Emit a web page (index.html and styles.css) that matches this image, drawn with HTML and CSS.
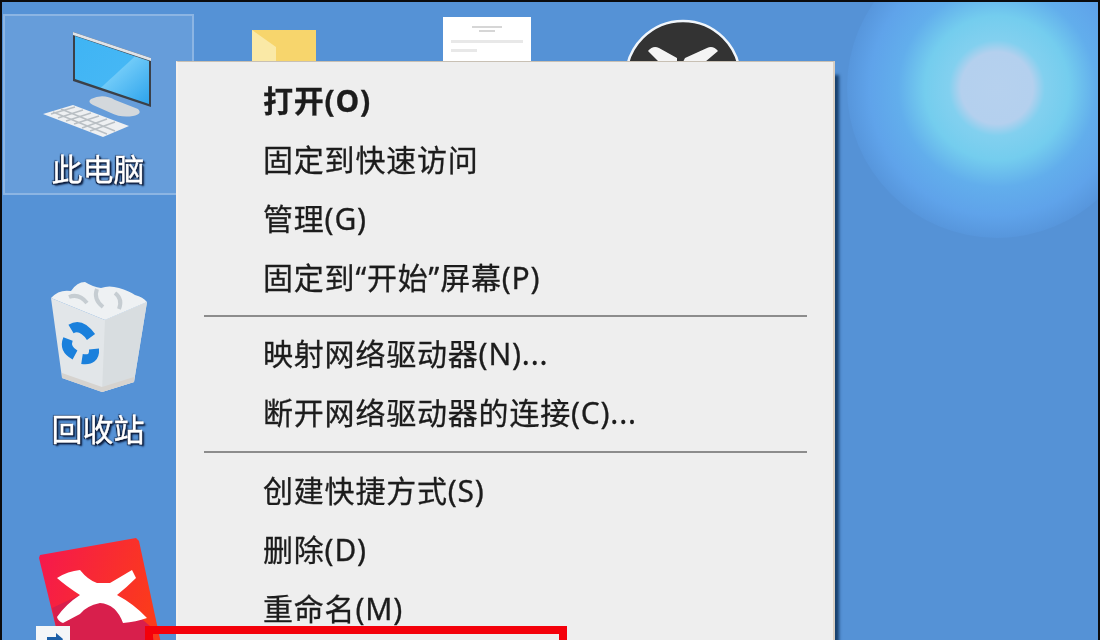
FILE: index.html
```html
<!DOCTYPE html>
<html lang="zh-CN">
<head>
    <meta charset="UTF-8">
    <meta name="viewport" content="width=device-width, initial-scale=1.0">
    <title>此电脑</title>
    <link rel="stylesheet" href="styles.css">
</head>
<body>
    <div class="desktop">
        <div class="sun"></div>

        <div class="selected-box"></div>

        <!-- monitor + keyboard -->
        <svg class="icon icon-pc" viewBox="0 0 120 120" width="120" height="120">
            <defs>
                <linearGradient id="screenFill" x1="0" y1="0" x2="1" y2="1">
                    <stop offset="0" stop-color="#3fb4f4"/>
                    <stop offset="0.55" stop-color="#45b7f5"/>
                    <stop offset="0.56" stop-color="#6fcaf8"/>
                    <stop offset="1" stop-color="#2da3ec"/>
                </linearGradient>
            </defs>
            <polygon points="32,1 110,27 110,76 32,50" fill="#3b4048"/>
            <polygon points="32,1 110,27 110,30 32,4" fill="#dfe3e8"/>
            <polygon points="34,5 108,30 108,73 34,48" fill="url(#screenFill)"/>
            <path d="M50 68 Q 62 62 74 69 L 97 78 Q 102 83 92 85 Q 80 87 70 82 L 52 74 Q 46 71 50 68 Z" fill="#d3d8dc"/>
            <polygon points="2,83 32,74 88,95 62,106" fill="#eef0f2"/>
            <path d="M10 83 L 34 76 M17 87 L 42 79 M25 90 L 50 82 M33 93 L 58 85 M41 97 L 66 88 M49 100 L 74 91 M20 78 L 74 100 M12 81 L 66 103" stroke="#b9bfc4" stroke-width="1.4" fill="none"/>
        </svg>
        <div class="icon-label label-pc">此电脑</div>

        <!-- folder, mostly behind the menu -->
        <svg class="icon icon-folder" viewBox="0 0 66 32" width="66" height="32">
            <rect x="1" y="0" width="64" height="32" fill="#f7d56c"/>
            <polygon points="1,0 1,32 25,32 25,17" fill="#fae9a6"/>
        </svg>

        <!-- document thumbnail -->
        <div class="doc-thumb">
            <div class="doc-title"></div>
            <div class="doc-title short"></div>
            <div class="doc-line"></div>
            <div class="doc-line tiny"></div>
        </div>

        <!-- round black app icon -->
        <svg class="icon icon-round" viewBox="0 0 120 46" width="120" height="46">
            <circle cx="60" cy="60" r="57" fill="#333" stroke="#f1f6fb" stroke-width="2.5"/>
            <path d="M25 33 Q 30 27 36 30 L 54 40 L 54 44 L 36 44 Z M95 33 Q 90 27 84 30 L 62 40 L 60 44 L 82 44 Z" fill="#f4f4f4"/>
        </svg>

        <!-- recycle bin -->
        <svg class="icon icon-bin" viewBox="0 0 100 116" width="100" height="116">
            <polygon points="2,19 56,41 98,23 85,103 53,113 13,99" fill="#e2e6e9"/>
            <polygon points="56,41 98,23 85,103 53,113" fill="#d8dde0"/>
            <polygon points="13,94 53,108 85,98 85,103 53,113 13,99" fill="#d6d3cf"/>
            <path d="M2 19 Q 10 10 22 12 Q 28 3 36 3 Q 44 8 52 9 Q 60 6 70 9 Q 80 12 86 16 Q 94 18 98 23 L 56 41 Z" fill="#eef1f3"/>
            <path d="M20 18 Q 30 14 38 24 M48 10 Q 44 20 54 28 M66 14 Q 74 20 70 30" stroke="#c6cdd2" stroke-width="4" fill="none"/>
            <g fill="none" stroke="#1a80dc" stroke-width="10">
                <path d="M22 50 Q 32 44 42 58"/>
                <path d="M19 60 Q 15 70 26 76"/>
                <path d="M33 80 Q 46 82 45 70"/>
            </g>
        </svg>
        <div class="icon-label label-bin">回收站</div>

        <!-- XMind style tile -->
        <svg class="icon icon-x" viewBox="0 0 125 110" width="125" height="110">
            <defs>
                <linearGradient id="tileFill" x1="0" y1="0" x2="1" y2="0.3">
                    <stop offset="0" stop-color="#f5174f"/>
                    <stop offset="1" stop-color="#fb3a1c"/>
                </linearGradient>
            </defs>
            <polygon points="1,20 2,17 98,0 101,3 124,110 23,110" fill="url(#tileFill)"/>
            <polygon points="14,70 42,57 79,60 112,88 118,110 23,110" fill="#d81f4c"/>
            <path d="M19 40 Q 30 33 42 32 Q 50 42 59 45 L 72 45 Q 84 38 94 32 L 98 40 Q 88 50 79 57 Q 96 66 109 80 Q 98 84 85 85 Q 78 66 62 65 Q 48 68 42 76 L 25 85 Q 20 83 19 79 Q 28 66 42 57 Q 28 48 19 40 Z" fill="#fff"/>
        </svg>
        <div class="shortcut-badge">
            <svg viewBox="0 0 30 14" width="30" height="14">
                <path d="M9 14 L 9 6 L 18 6 L 18 2 L 25 8 L 22 14 Z" fill="#1b5fa8"/>
            </svg>
        </div>

        <div class="context-menu">
            <div class="menu-item default">打开(O)</div>
            <div class="menu-item">固定到快速访问</div>
            <div class="menu-item">管理(G)</div>
            <div class="menu-item">固定到“开始”屏幕(P)</div>
            <div class="menu-sep"></div>
            <div class="menu-item">映射网络驱动器(N)...</div>
            <div class="menu-item">断开网络驱动器的连接(C)...</div>
            <div class="menu-sep lower"></div>
            <div class="menu-item">创建快捷方式(S)</div>
            <div class="menu-item">删除(D)</div>
            <div class="menu-item">重命名(M)</div>
        </div>

        <div class="red-box"></div>
    </div>
</body>
</html>
```
FILE: styles.css
```css
* {
    margin: 0;
    padding: 0;
    box-sizing: border-box;
}

html, body {
    width: 1100px;
    height: 640px;
    overflow: hidden;
    background: #0b0b0d;
}

/* the reference is an upscaled screenshot, so everything is a bit soft */
.desktop {
    position: relative;
    width: 1100px;
    height: 640px;
    overflow: hidden;
    background: #5592d6;
    border-top: 2px solid #0b0b0d;
    border-left: 2px solid #0b0b0d;
    border-right: 2px solid #0b0b0d;
    font-family: "Noto Sans", "Noto Sans CJK SC", sans-serif;
    filter: blur(0.5px);
}

.sun {
    position: absolute;
    left: 845px;
    top: -64px;
    width: 300px;
    height: 300px;
    border-radius: 50%;
    background: radial-gradient(circle closest-side, #b6d1ee 0, #b4d0ee 24%, #82d0ef 32%, #74cdee 48%, #62aeec 66%, #5fa3ea 85%, #5796dc 100%);
}

.selected-box {
    position: absolute;
    left: 1px;
    top: 12px;
    width: 191px;
    height: 181px;
    background: rgba(255, 255, 255, 0.1);
    border: 2px solid rgba(255, 255, 255, 0.25);
}

.icon {
    position: absolute;
    display: block;
}

.icon-pc { left: 39px; top: 29px; }
.icon-folder { left: 249px; top: 28px; }
.icon-round { left: 621px; top: 16px; }
.icon-bin { left: 47px; top: 277px; }
.icon-x { left: 36px; top: 536px; }

.icon-label {
    position: absolute;
    left: 48px;
    width: 96px;
    color: #fff;
    font-size: 31px;
    line-height: 40px;
    text-align: center;
    white-space: nowrap;
    -webkit-text-stroke: 0.4px #fff;
    text-shadow: 1px 1px 1px #0a1a3a, -1px 1px 1px #0a1a3a, 2px 2px 2px #0a1a3a, -1px -1px 1px rgba(10, 26, 58, 0.6);
}

.label-pc { top: 147px; }
.label-bin { top: 407px; }

.doc-thumb {
    position: absolute;
    left: 441px;
    top: 15px;
    width: 88px;
    height: 46px;
    padding: 9px 8px;
    background: #fff;
}

.doc-title {
    width: 30px;
    height: 2px;
    margin: 0 auto 2px;
    background: #d6d6d6;
}

.doc-title.short {
    width: 16px;
}

.doc-line {
    height: 3px;
    margin-top: 8px;
    background: #e8e8e8;
}

.doc-line.tiny {
    width: 26px;
    margin-top: 6px;
}

.shortcut-badge {
    position: absolute;
    left: 34px;
    top: 624px;
    width: 34px;
    height: 16px;
    padding: 2px;
    background: #f4f6f8;
}

.context-menu {
    position: absolute;
    left: 174px;
    top: 59px;
    width: 659px;
    height: 600px;
    padding-top: 9px;
    background: #eeeeee;
    border-top: 1px solid #c8c0b4;
    border-left: 2px solid #f6f1ec;
    border-right: 2px solid #d8cfc4;
    box-shadow: 6px 12px 3px -2px rgba(14, 50, 90, 0.85);
}

.menu-item {
    height: 59px;
    padding-left: 85px;
    color: #1c1c1c;
    font-size: 30px;
    line-height: 59px;
    white-space: nowrap;
    letter-spacing: 0.8px;
    -webkit-text-stroke: 0.3px #1c1c1c;
}

.menu-item.default {
    font-weight: 700;
}

.menu-sep {
    height: 2px;
    margin: 8px 26px 7px;
    background: #8c8c8c;
}

.menu-sep.lower {
    margin: 9px 26px 8px;
}

.red-box {
    position: absolute;
    left: 143px;
    top: 624px;
    width: 422px;
    height: 60px;
    border: 8px solid #f4000a;
}
```
